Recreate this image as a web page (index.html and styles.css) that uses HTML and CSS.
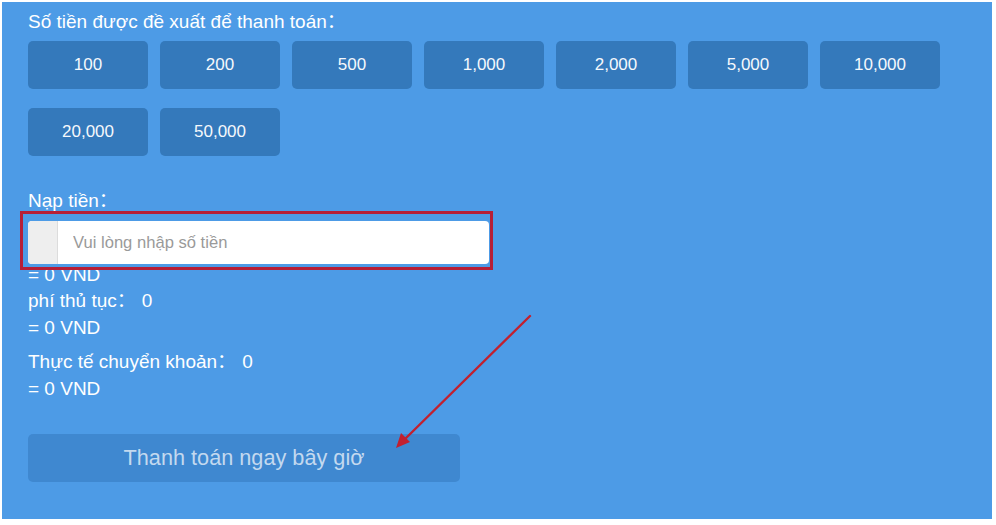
FILE: index.html
```html
<!DOCTYPE html>
<html lang="vi">
<head>
    <meta charset="UTF-8">
    <meta name="viewport" content="width=device-width, initial-scale=1.0">
    <title>Nạp tiền</title>
    <link rel="stylesheet" href="styles.css">
</head>
<body>
    <div class="recharge-panel">
        <div class="label">Số tiền được đề xuất để thanh toán：</div>

        <!-- mệnh giá gợi ý -->
        <div class="amount-grid">
            <button class="amount-btn">100</button>
            <button class="amount-btn">200</button>
            <button class="amount-btn">500</button>
            <button class="amount-btn">1,000</button>
            <button class="amount-btn">2,000</button>
            <button class="amount-btn">5,000</button>
            <button class="amount-btn">10,000</button>
            <button class="amount-btn">20,000</button>
            <button class="amount-btn">50,000</button>
        </div>

        <div class="label deposit-label">Nạp tiền：</div>
        <div class="input-group">
            <span class="input-addon"></span>
            <input type="text" class="amount-input" placeholder="Vui lòng nhập số tiền">
            <div class="highlight-box"></div>
        </div>
        <div class="convert-line">= 0 VND</div>

        <div class="info-group">
            <div>phí thủ tục：<span class="value">0</span></div>
            <div>= 0 VND</div>
        </div>
        <div class="info-group transfer">
            <div>Thực tế chuyển khoản：<span class="value">0</span></div>
            <div>= 0 VND</div>
        </div>

        <button class="pay-btn">Thanh toán ngay bây giờ</button>

        <!-- mũi tên chỉ vào nút thanh toán -->
        <svg class="pointer-arrow" width="996" height="525" viewBox="0 0 996 525">
            <line x1="530" y1="316" x2="403" y2="441" stroke="#c2202f" stroke-width="2.4" stroke-linecap="round"/>
            <polygon points="396,448 401,433 410,442" fill="#c2202f"/>
        </svg>
    </div>
</body>
</html>
```

FILE: styles.css
```css
* {
    margin: 0;
    padding: 0;
    box-sizing: border-box;
    font-family: 'Liberation Sans', Arial, 'Noto Sans CJK SC', sans-serif;
}

body {
    background: #fff;
}

.recharge-panel {
    position: relative;
    margin: 2px;
    width: 990px;
    height: 517px;
    background: #4d9be6;
    color: #fff;
    padding: 9px 26px 0;
}

.label {
    font-size: 19px;
    line-height: 21px;
}

.amount-grid {
    display: flex;
    flex-wrap: wrap;
    column-gap: 12px;
    row-gap: 19px;
    width: 920px;
    margin-top: 9px;
}

.amount-btn {
    width: 120px;
    height: 48px;
    border: none;
    border-radius: 5px;
    background: #3479bb;
    color: #f4f8fc;
    font-size: 17px;
    cursor: pointer;
}

.deposit-label {
    margin-top: 34px;
}

.input-group {
    position: relative;
    display: flex;
    width: 461px;
    height: 43px;
    margin-top: 10px;
    background: #fff;
    border-radius: 4px;
}

.input-addon {
    width: 30px;
    background: #eeeeee;
    border-right: 1px solid #dcdcdc;
    border-radius: 4px 0 0 4px;
}

.amount-input {
    flex: 1;
    border: none;
    outline: none;
    background: transparent;
    padding-left: 15px;
    font-size: 16.6px;
    color: #333;
    border-radius: 0 4px 4px 0;
}

.amount-input::placeholder {
    color: #9a9a9a;
}

.highlight-box {
    position: absolute;
    left: -8px;
    top: -10px;
    right: -4px;
    bottom: -6px;
    border: 3px solid #b61f37;
    z-index: 2;
}

.convert-line {
    font-size: 19px;
    line-height: 22px;
}

.info-group {
    margin-top: 1px;
    font-size: 19px;
    line-height: 27px;
}

.info-group.transfer {
    margin-top: 7px;
}

.value {
    margin-left: 6px;
}

.pay-btn {
    display: block;
    width: 432px;
    height: 48px;
    margin-top: 32px;
    border: none;
    border-radius: 5px;
    background: #3f88d0;
    color: #c3d9ef;
    font-size: 21.7px;
}

.pointer-arrow {
    position: absolute;
    left: -2px;
    top: -2px;
    pointer-events: none;
}
```
